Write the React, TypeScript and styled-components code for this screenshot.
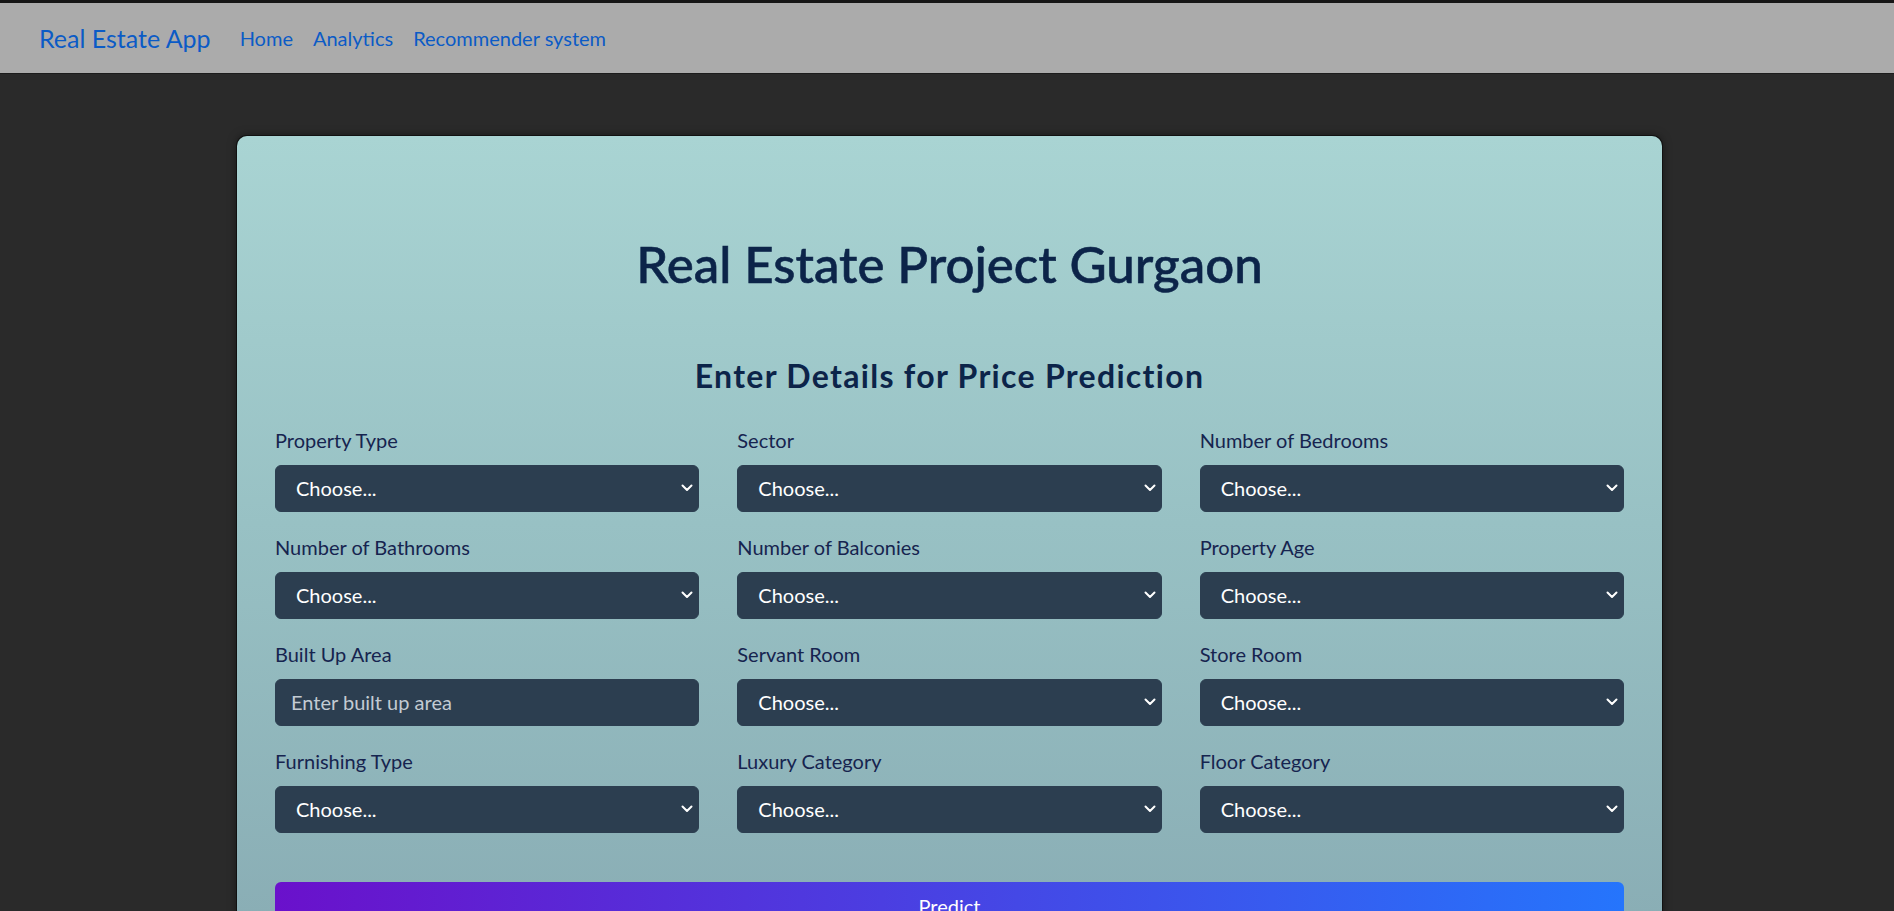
import React from "react";
import styled, { createGlobalStyle } from "styled-components";

const Global = createGlobalStyle`
  html, body { margin: 0; padding: 0; }
  body {
    background: #2a2a2a;
    font-family: Lato, "Open Sans", sans-serif;
  }
  * { box-sizing: border-box; }
`;

const Nav = styled.nav`
  height: 74px;
  background: #ababab;
  border-top: 3px solid #161616;
  border-bottom: 1px solid #1c1c1c;
  display: flex;
  align-items: center;
  padding: 0 0 0 39px;
`;

const Brand = styled.a`
  font-size: 25px;
  color: #0b5bc6;
  text-decoration: none;
  margin-right: 19px;
`;

const NavLink = styled.a`
  font-size: 20px;
  color: #0b5bc6;
  text-decoration: none;
  padding: 0 10px;
`;

const Main = styled.main`
  display: flex;
  justify-content: center;
  padding: 62px 0 0 5px;
`;

const Card = styled.section`
  width: 1425px;
  border-radius: 10px;
  background: linear-gradient(180deg, #a9d4d3 0%, #98c1c4 45%, #87aab2 100%);
  box-shadow: 0 0 0 1px #111, 0 0 10px rgba(0, 0, 0, 0.5);
  padding: 38px 38px 60px;
  min-height: 860px;
`;

const Title = styled.h1`
  margin: 59px 0 0;
  text-align: center;
  font-size: 51px;
  line-height: 1.2;
  font-weight: 500;
  color: #0c2449;
  -webkit-text-stroke: 0.6px #0c2449;
`;

const Subtitle = styled.h2`
  margin: 63px 0 29px;
  text-align: center;
  font-size: 32px;
  line-height: 1.2;
  font-weight: 700;
  letter-spacing: 1.3px;
  color: #0c2449;
`;

const Grid = styled.div`
  display: grid;
  grid-template-columns: repeat(3, 1fr);
  column-gap: 38px;
  row-gap: 20px;
`;

const Field = styled.div`
  display: flex;
  flex-direction: column;
  gap: 10px;
`;

const Label = styled.label`
  font-size: 20px;
  line-height: 30px;
  color: #16244f;
`;

const SelectWrap = styled.div`
  position: relative;
`;

const Select = styled.select`
  width: 100%;
  height: 47px;
  appearance: none;
  background: #2c3e50;
  color: #ffffff;
  border: 1px solid #2c3e50;
  border-radius: 6px;
  font-family: inherit;
  font-size: 20px;
  padding: 0 40px 0 20px;
  outline: none;
`;

const Chevron = styled.svg`
  position: absolute;
  right: 6px;
  top: 50%;
  width: 12px;
  height: 8px;
  transform: translateY(-50%);
  pointer-events: none;
`;

const Input = styled.input`
  width: 100%;
  height: 47px;
  background: #2c3e50;
  color: #ffffff;
  border: 1px solid #2c3e50;
  border-radius: 6px;
  font-family: inherit;
  font-size: 20px;
  padding: 0 15px;
  outline: none;
  &::placeholder { color: #c3cbd3; }
`;

const Button = styled.button`
  display: block;
  width: 100%;
  height: 48px;
  margin-top: 49px;
  border: none;
  border-radius: 6px;
  background: linear-gradient(90deg, #6a11cb 0%, #2575fc 100%);
  color: #ffffff;
  font-family: inherit;
  font-size: 20px;
`;

const fields: { label: string; input?: boolean }[] = [
  { label: "Property Type" },
  { label: "Sector" },
  { label: "Number of Bedrooms" },
  { label: "Number of Bathrooms" },
  { label: "Number of Balconies" },
  { label: "Property Age" },
  { label: "Built Up Area", input: true },
  { label: "Servant Room" },
  { label: "Store Room" },
  { label: "Furnishing Type" },
  { label: "Luxury Category" },
  { label: "Floor Category" },
];

export default function App() {
  return (
    <>
      <Global />
      <Nav>
        <Brand href="#">Real Estate App</Brand>
        <NavLink href="#">Home</NavLink>
        <NavLink href="#">Analytics</NavLink>
        <NavLink href="#">Recommender system</NavLink>
      </Nav>
      <Main>
        <Card>
          <Title>Real Estate Project Gurgaon</Title>
          <Subtitle>Enter Details for Price Prediction</Subtitle>
          <Grid>
            {fields.map((f) => (
              <Field key={f.label}>
                <Label>{f.label}</Label>
                {f.input ? (
                  <Input placeholder="Enter built up area" />
                ) : (
                  <SelectWrap>
                    <Select defaultValue="">
                      <option value="">Choose...</option>
                    </Select>
                    <Chevron viewBox="0 0 12 8">
                      <path
                        d="M1.5 1.5l4.5 4.5 4.5-4.5"
                        fill="none"
                        stroke="#ffffff"
                        strokeWidth="2"
                        strokeLinecap="round"
                        strokeLinejoin="round"
                      />
                    </Chevron>
                  </SelectWrap>
                )}
              </Field>
            ))}
          </Grid>
          <Button>Predict</Button>
        </Card>
      </Main>
    </>
  );
}
